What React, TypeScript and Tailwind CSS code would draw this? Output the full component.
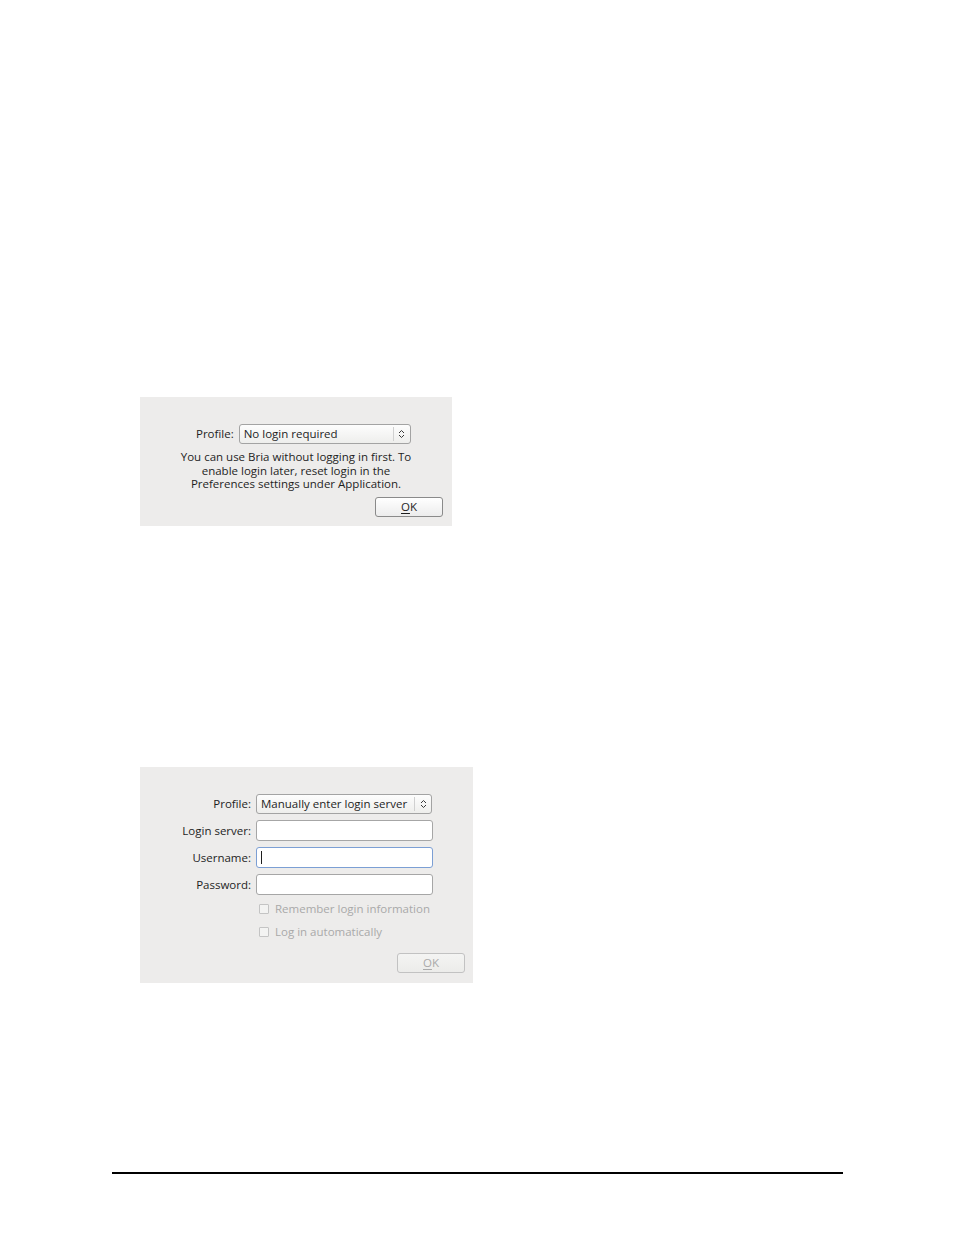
import React from "react";

const font = { fontFamily: '"Open Sans", "Noto Sans", sans-serif' };

function Arrows() {
  return (
    <svg width="7" height="10" viewBox="0 0 7 10" className="block">
      <path d="M1 4 L3.5 1.5 L6 4" fill="none" stroke="#3a3a3a" strokeWidth="1" />
      <path d="M1 6 L3.5 8.5 L6 6" fill="none" stroke="#3a3a3a" strokeWidth="1" />
    </svg>
  );
}

function Select({ text, w }: { text: string; w: string }) {
  return (
    <div
      className={`${w} h-[20px] flex items-center rounded-[3px] border border-[#a3a3a3] bg-gradient-to-b from-[#fdfdfd] to-[#eeeeec] text-[#1e1e1e]`}
    >
      <span className="flex-1 pl-[4px] leading-none whitespace-nowrap">{text}</span>
      <span className="h-[14px] w-px bg-[#d0d0d0]" />
      <span className="w-[16px] flex justify-center">
        <Arrows />
      </span>
    </div>
  );
}

function Input({ focused, children }: { focused?: boolean; children?: React.ReactNode }) {
  return (
    <div
      className={`w-[177px] h-[21px] rounded-[3px] bg-white flex items-center ${
        focused ? "border border-[#7c9fd4]" : "border border-[#a6a6a6]"
      }`}
    >
      {children}
    </div>
  );
}

function Check({ label }: { label: string }) {
  return (
    <div className="flex items-center gap-[6px] h-[14px]">
      <span className="w-[10px] h-[10px] border border-[#c4c4c4] bg-[#f3f3f2] rounded-[1px]" />
      <span className="text-[#a9a9a9] leading-none whitespace-nowrap">{label}</span>
    </div>
  );
}

export default function App() {
  return (
    <div className="w-[954px] h-[1235px] bg-white relative text-[11.5px]" style={font}>
      <div className="pt-[397px] pl-[140px]">
        {/* Panel 1 */}
        <div className="w-[312px] h-[129px] bg-[#edeceb] flex flex-col">
          <div className="mt-[27px] ml-[56px] flex items-center gap-[5px]">
            <span className="text-[#1e1e1e] leading-none">Profile:</span>
            <Select text="No login required" w="w-[172px]" />
          </div>
          <p className="mt-[6px] text-center leading-[13.5px] text-[#1e1e1e]">
            You can use Bria without logging in first. To
            <br />
            enable login later, reset login in the
            <br />
            Preferences settings under Application.
          </p>
          <div className="mt-[6px] flex justify-end pr-[9px]">
            <button className="w-[68px] h-[20px] rounded-[3px] border border-[#8a8a8a] bg-gradient-to-b from-[#ffffff] to-[#ececec] text-[#1e1e1e] leading-none">
              <span className="underline underline-offset-2">O</span>K
            </button>
          </div>
        </div>

        {/* Panel 2 */}
        <div className="mt-[241px] w-[333px] h-[216px] bg-[#edeceb] flex flex-col">
          <div className="mt-[27px] grid grid-cols-[111px_177px] gap-x-[5px] gap-y-[6px] items-center text-[#1e1e1e]">
            <span className="text-right leading-none">Profile:</span>
            <Select text="Manually enter login server" w="w-[176px]" />
            <span className="text-right leading-none">Login server:</span>
            <Input />
            <span className="text-right leading-none">Username:</span>
            <Input focused>
              <span className="ml-[4px] w-px h-[13px] bg-[#1e1e1e]" />
            </Input>
            <span className="text-right leading-none">Password:</span>
            <Input />
          </div>
          <div className="ml-[119px] mt-[7px] flex flex-col gap-[9px]">
            <Check label="Remember login information" />
            <Check label="Log in automatically" />
          </div>
          <div className="mt-[14px] flex justify-end pr-[8px]">
            <button className="w-[68px] h-[20px] rounded-[3px] border border-[#c2c2c2] bg-gradient-to-b from-[#f4f4f3] to-[#ececea] text-[#aaaaaa] leading-none">
              <span className="underline underline-offset-2">O</span>K
            </button>
          </div>
        </div>
      </div>

      {/* footer rule */}
      <div className="absolute left-[112px] top-[1172px] w-[731px] h-[1.5px] bg-black" />
    </div>
  );
}
